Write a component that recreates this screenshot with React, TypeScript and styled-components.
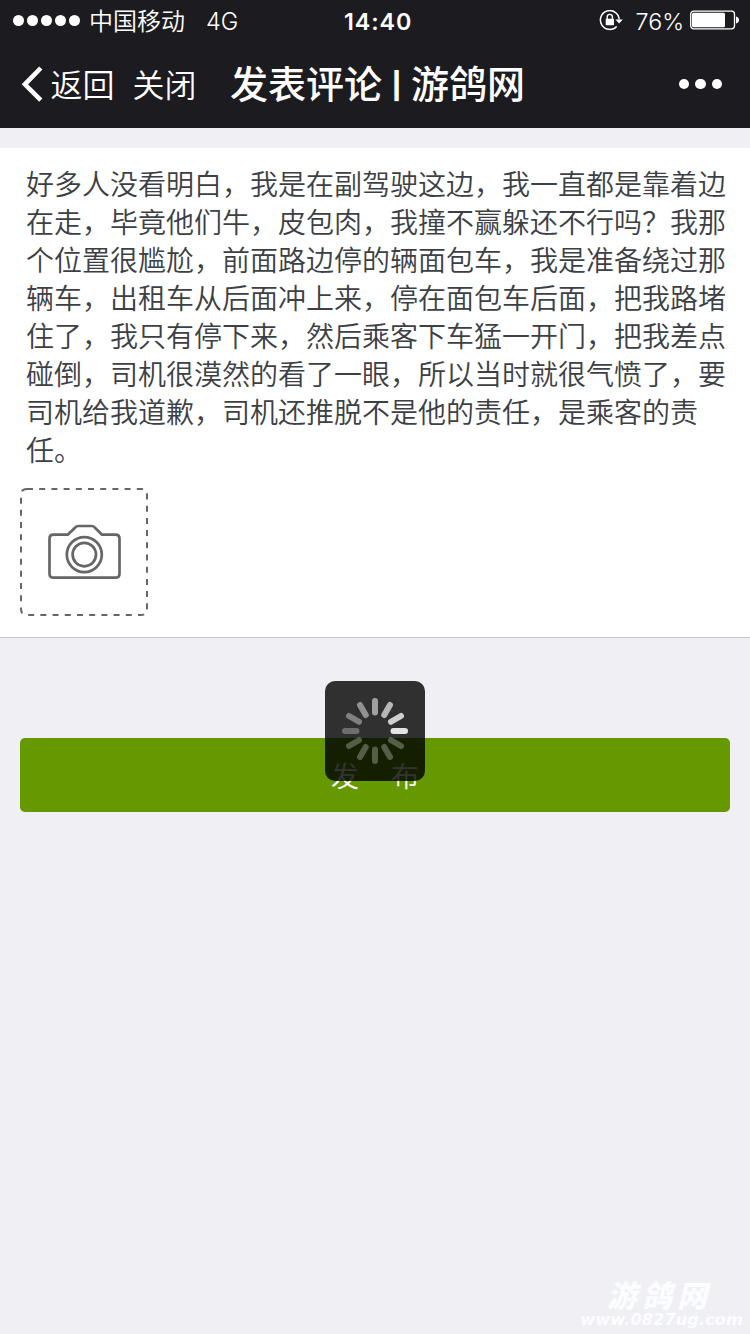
import React from "react";
import styled, { createGlobalStyle } from "styled-components";

const Global = createGlobalStyle`
  * { box-sizing: border-box; }
  body {
    margin: 0;
    background: #efeff4;
    font-family: Inter, "Noto Sans CJK SC", sans-serif;
  }
`;

const Screen = styled.div`
  position: relative;
  width: 750px;
  height: 1334px;
  overflow: hidden;
  background: #efeff4;
`;

const Header = styled.header`
  height: 128px;
  background: #1c1b20;
  color: #fff;
`;

const StatusBar = styled.div`
  display: grid;
  grid-template-columns: 344px 68px 1fr;
  align-items: center;
  height: 40px;
  padding: 1px 11px 0 0;
  font-size: 24px;
  line-height: 39px;
  white-space: nowrap;
`;

const Carrier = styled.div`
  display: flex;
  align-items: center;
  padding-left: 13px;
`;

const Signal = styled.div`
  display: flex;
  gap: 3px;
  margin-right: 9px;
`;

const SignalDot = styled.i`
  width: 11px;
  height: 11px;
  border-radius: 50%;
  background: #fff;
`;

const CarrierName = styled.span`
  width: 117px;
  font-family: "Noto Sans CJK SC", sans-serif;
  font-weight: 350;
  line-height: 37px;
  padding-bottom: 2px;
`;

const Network = styled.span`
  padding-top: 2px;
  font-size: 23.5px;
  font-weight: 350;
  line-height: 37px;
`;

const Clock = styled.time`
  padding-top: 2px;
  font-size: 23.3px;
  font-weight: 600;
  line-height: 37px;
  letter-spacing: 0.9px;
`;

const Power = styled.div`
  display: flex;
  align-items: center;
  justify-content: flex-end;
  svg { display: block; }
`;

const Percent = styled.span`
  margin: 0 6px 0 12px;
  padding-top: 2px;
  font-size: 23.3px;
  font-weight: 350;
  line-height: 37px;
`;

const Battery = styled.svg`
  margin-bottom: 1px;
`;

const NavBar = styled.nav`
  display: flex;
  align-items: center;
  height: 88px;
  padding: 0 28px 0 21px;
  font-family: "Noto Sans CJK SC", sans-serif;
  white-space: nowrap;
`;

const NavLink = styled.span<{ $width: number }>`
  width: ${(p) => p.$width}px;
  font-size: 32px;
  font-weight: 350;
  line-height: 86px;
  padding-bottom: 2px;
`;

const BackIcon = styled.svg`
  flex: none;
  margin-right: 7.5px;
`;

const Title = styled.h1`
  display: flex;
  align-items: center;
  margin: 0;
  padding-bottom: 4px;
  font-size: 38px;
  font-weight: 500;
  line-height: 80px;
`;

const TitleBar = styled.span`
  width: 29px;
  padding-top: 8px;
  font-family: Inter, sans-serif;
  font-size: 26px;
  font-weight: 800;
  line-height: 72px;
  text-align: center;
`;

const More = styled.div`
  display: flex;
  gap: 6px;
  margin-left: auto;
`;

const MoreDot = styled.i`
  width: 10.5px;
  height: 10.5px;
  border-radius: 50%;
  background: #fff;
`;

const Editor = styled.section`
  height: 490px;
  margin-top: 20px;
  padding: 16px 20px 0;
  border-bottom: 1px solid #c8c8cb;
  background: #fff;
`;

const Comment = styled.p`
  margin: 0 0 20px;
  padding-left: 6px;
  color: #3c4045;
  font-family: "Noto Sans CJK SC", sans-serif;
  font-size: 28px;
  font-weight: 350;
  line-height: 38px;
  white-space: pre;
`;

const Upload = styled.div`
  width: 128px;
  height: 128px;
  svg { display: block; }
`;

const Submit = styled.button`
  display: flex;
  align-items: center;
  justify-content: center;
  gap: 32px;
  width: 710px;
  height: 74px;
  margin: 100px 20px 0;
  padding: 0 0 1px;
  border: 0;
  border-radius: 5px;
  background: #690;
  color: #fff;
  font-family: "Noto Sans CJK SC", sans-serif;
  font-size: 28px;
  font-weight: 350;
`;

const Loading = styled.div`
  position: absolute;
  top: 681px;
  left: 325px;
  width: 100px;
  height: 100px;
  border-radius: 10px;
  background: rgba(0, 0, 0, 0.8);
`;

const Watermark = styled.div`
  position: absolute;
  right: 7px;
  bottom: 5px;
  display: flex;
  flex-direction: column;
  align-items: flex-end;
  color: #fbfdfe;
  font-style: italic;
  font-weight: 700;
  white-space: nowrap;
`;

const WatermarkName = styled.span`
  margin: 0 31px 2px 0;
  font-family: "Noto Sans CJK SC", sans-serif;
  font-size: 30px;
  font-weight: 900;
  line-height: 30px;
  letter-spacing: 5px;
`;

const WatermarkUrl = styled.span`
  font-family: "DejaVu Sans", sans-serif;
  font-size: 16.3px;
  line-height: 18px;
`;

const comment = [
  "好多人没看明白，我是在副驾驶这边，我一直都是靠着边",
  "在走，毕竟他们牛，皮包肉，我撞不赢躲还不行吗？我那",
  "个位置很尴尬，前面路边停的辆面包车，我是准备绕过那",
  "辆车，出租车从后面冲上来，停在面包车后面，把我路堵",
  "住了，我只有停下来，然后乘客下车猛一开门，把我差点",
  "碰倒，司机很漠然的看了一眼，所以当时就很气愤了，要",
  "司机给我道歉，司机还推脱不是他的责任，是乘客的责",
  "任。",
].join("\n");

// Spoke opacity, clockwise from three o'clock.
const spokes = [0.87, 0.28, 0.28, 0.28, 0.28, 0.28, 0.3, 0.39, 0.47, 0.55, 0.65, 0.77];

export default function App() {
  return (
    <Screen>
      <Global />
      <Header>
        <StatusBar>
          <Carrier>
            <Signal>
              {[0, 1, 2, 3, 4].map((n) => <SignalDot key={n} />)}
            </Signal>
            <CarrierName>中国移动</CarrierName>
            <Network>4G</Network>
          </Carrier>
          <Clock>14:40</Clock>
          <Power>
            <svg width="24" height="22" viewBox="0 0 24 22" fill="none" stroke="#fff">
              <path d="M17.7 16.4A9.4 9.4 0 1 1 20.2 9.5" strokeWidth="1.5" />
              <path d="M16.4 9.5h7.4L20.1 13.5z" fill="#fff" stroke="none" />
              <rect x="6.7" y="8.8" width="8.3" height="6.4" rx=".6" fill="#fff" stroke="none" />
              <path d="M8.2 9.5V7a2.6 2.6 0 0 1 5.2 0V9.5" strokeWidth="1.4" />
            </svg>
            <Percent>76%</Percent>
            <Battery width="49" height="20" viewBox="0 0 49 20">
              <rect x=".7" y="1.2" width="43.8" height="17.6" rx="3" fill="none" stroke="#fff" strokeWidth="1.3" />
              <rect x="2" y="2.7" width="33" height="14.6" rx="1.5" fill="#fff" />
              <path d="M46 6.5q3 .7 3 3.5t-3 3.5z" fill="#fff" />
            </Battery>
          </Power>
        </StatusBar>
        <NavBar>
          <BackIcon width="22" height="36" viewBox="0 0 22 36" fill="none" stroke="#fff" strokeWidth="4.6">
            <path d="M19.8 2L3.9 18.3 19.8 34.2" />
          </BackIcon>
          <NavLink $width={82}>返回</NavLink>
          <NavLink $width={97.5}>关闭</NavLink>
          <Title>发表评论<TitleBar>|</TitleBar>游鸽网</Title>
          <More><MoreDot /><MoreDot /><MoreDot /></More>
        </NavBar>
      </Header>
      <Editor>
        <Comment>{comment}</Comment>
        <Upload>
          <svg width="128" height="128" viewBox="0 0 128 128" fill="none" stroke="#666">
            <path d="M7 1H121Q127 1 127 7V121Q127 127 121 127H7Q1 127 1 121V7Q1 1 7 1Z" strokeWidth="2" strokeDasharray="6 6.2" />
            <g strokeWidth="2.7" strokeLinejoin="round">
              <path d="M33.5 46.7H47.7L55 39.7Q56.5 38 58.5 38H71.5Q73.5 38 75 39.7L82 46.7H95.5Q99.5 46.7 99.5 50.7V85.7Q99.5 89.7 95.5 89.7H33.5Q29.5 89.7 29.5 85.7V50.7Q29.5 46.7 33.5 46.7Z" />
              <circle cx="64.3" cy="66.6" r="17.5" />
              <circle cx="64.3" cy="66.6" r="11.7" />
            </g>
          </svg>
        </Upload>
      </Editor>
      <Submit><span>发</span><span>布</span></Submit>
      <Loading>
        <svg width="100" height="100" viewBox="0 0 100 100">
          {spokes.map((opacity, i) => (
            <rect key={i} x="65.5" y="47" width="17.5" height="6" rx="3" fill="#fff" opacity={opacity} transform={`rotate(${i * 30} 50 50)`} />
          ))}
        </svg>
      </Loading>
      <Watermark>
        <WatermarkName>游鸽网</WatermarkName>
        <WatermarkUrl>www.0827ug.com</WatermarkUrl>
      </Watermark>
    </Screen>
  );
}
